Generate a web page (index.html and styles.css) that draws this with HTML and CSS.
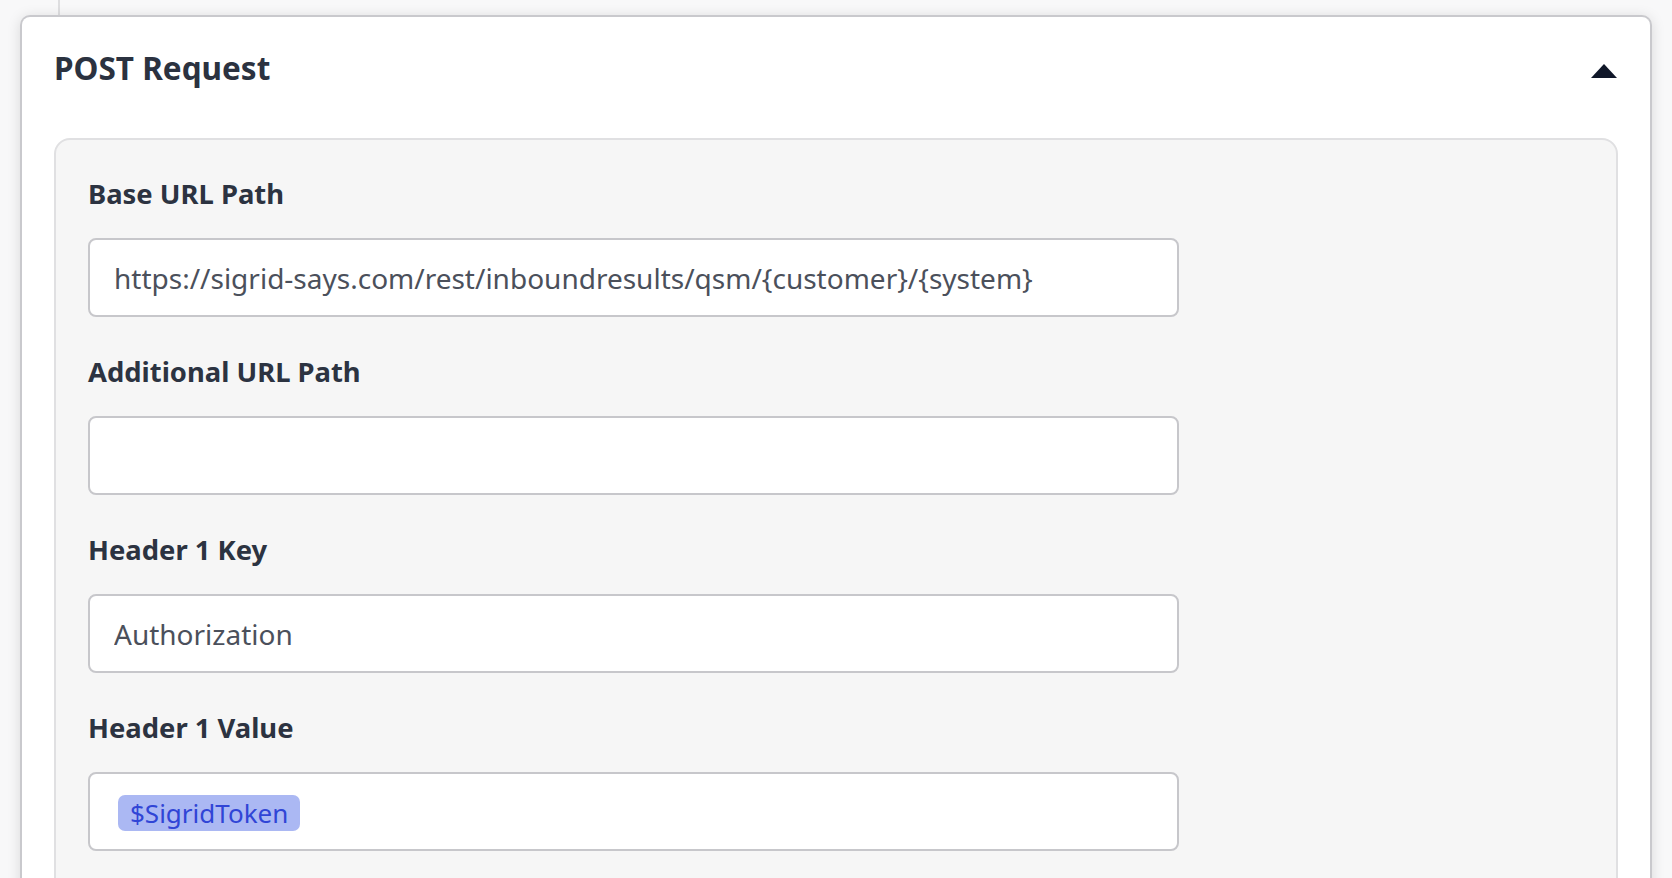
FILE: index.html
```html
<!DOCTYPE html>
<html>
<head>
<meta charset="utf-8">
<title>POST Request</title>
<link rel="stylesheet" href="styles.css">
</head>
<body>
	<div class="connector"></div>
	<div class="card">
		<div class="card-header">
			<h2 class="card-title">POST Request</h2>
			<span class="toggle" title="Collapse"></span>
		</div>
		<div class="panel">
			<div class="field">
				<label class="field-label">Base URL Path</label>
				<input class="field-input" type="text" value="https://sigrid-says.com/rest/inboundresults/qsm/{customer}/{system}">
			</div>
			<div class="field">
				<label class="field-label">Additional URL Path</label>
				<input class="field-input" type="text" value="">
			</div>
			<div class="field">
				<label class="field-label">Header 1 Key</label>
				<input class="field-input" type="text" value="Authorization">
			</div>
			<div class="field">
				<label class="field-label">Header 1 Value</label>
				<div class="field-input field-tags">
					<span class="tag">$SigridToken</span>
				</div>
			</div>
		</div>
	</div>
</body>
</html>
```

FILE: styles.css
```css
* {
	box-sizing: border-box;
}

body {
	margin: 0;
	background: #f8f8f9;
	font-family: "Noto Sans", "Open Sans", sans-serif;
	color: #2c3341;
	overflow: hidden;
}

/* line coming down from the parent step */
.connector {
	width: 2px;
	height: 15px;
	margin-left: 58px;
	background: #dedee0;
}

.card {
	margin: 0 20px 0 20px;
	background: #fff;
	border: 2px solid #c9c9cd;
	border-bottom: 0;
	border-radius: 10px 10px 0 0;
	box-shadow: 0 2px 14px rgba(0, 0, 0, 0.13);
	padding: 0 32px 40px;
}

.card-header {
	display: flex;
	align-items: center;
	justify-content: space-between;
	padding: 29px 0 48px;
}

.card-title {
	margin: 0;
	font-size: 31.5px;
	line-height: 44px;
	font-weight: 700;
	color: #2b3240;
}

.toggle {
	width: 0;
	height: 0;
	margin: 5px 1px 0 0;
	border-left: 13px solid transparent;
	border-right: 13px solid transparent;
	border-bottom: 14px solid #101729;
}

.panel {
	background: #f6f6f6;
	border: 2px solid #e0e0e2;
	border-radius: 16px;
	padding: 36px 32px 40px;
}

.field {
	margin-bottom: 37px;
}

.field-label {
	display: block;
	font-size: 27.4px;
	line-height: 36px;
	font-weight: 700;
	margin-bottom: 26px;
}

.field-input {
	display: block;
	width: 1091px;
	height: 79px;
	padding: 0 24px;
	background: #fff;
	border: 2px solid #c7c7cb;
	border-radius: 8px;
	font-family: inherit;
	font-size: 28px;
	color: #4b505b;
	outline: none;
}

.field-tags {
	display: flex;
	align-items: center;
	padding: 0 28px;
}

.tag {
	margin-top: 3px;
	padding: 0 12px;
	height: 36px;
	line-height: 36px;
	border-radius: 7px;
	background: #abb8f3;
	color: #3045d6;
	font-size: 26px;
}
```
